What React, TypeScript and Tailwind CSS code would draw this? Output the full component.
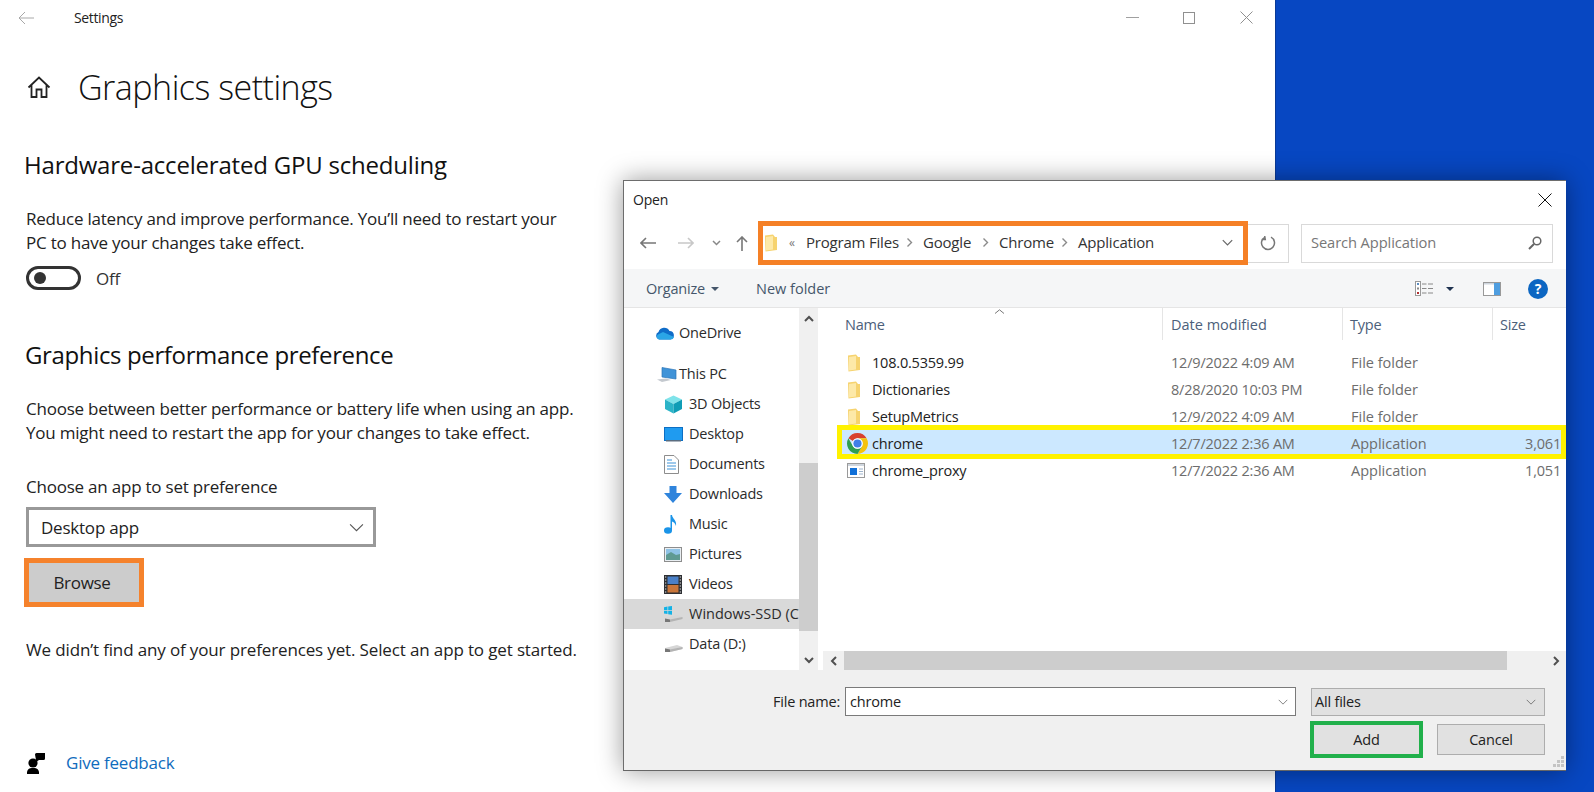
import React from "react";

const Folder = () => (
  <svg width="14" height="18" viewBox="0 0 14 18" className="shrink-0">
    <path d="M1 1.5 L9 0.5 L11 3 L13 3 L13 16 L1.5 17.5 Z" fill="#f6d36f" />
    <path d="M2 3 L9 2 L9 15.5 L2 16.5 Z" fill="#fde9a8" />
  </svg>
);

const Chev = () => (
  <svg width="7" height="11" viewBox="0 0 7 11" className="shrink-0">
    <path d="M1.5 1.5 L5.5 5.5 L1.5 9.5" fill="none" stroke="#8a8a8a" strokeWidth="1.4" />
  </svg>
);

const Down = ({ w = 14, h = 8, c = "#555", sw = 1.2 }: { w?: number; h?: number; c?: string; sw?: number }) => (
  <svg width={w} height={h} viewBox="0 0 14 8">
    <path d="M1 1 L7 7 L13 1" fill="none" stroke={c} strokeWidth={sw} />
  </svg>
);

const ChromeIcon = () => (
  <svg width="21" height="21" viewBox="2 2 20 20" className="shrink-0">
    <path d="M12 2a10 10 0 0 1 8.66 5H12a5 5 0 0 0-4.33 2.5L3.34 7A10 10 0 0 1 12 2z" fill="#d8412f" />
    <path d="M20.66 7A10 10 0 0 1 12 22l4.33-7.5A5 5 0 0 0 12 7h8.66z" fill="#f4c20d" />
    <path d="M12 22A10 10 0 0 1 3.34 7l4.33 7.5A5 5 0 0 0 12 17a5 5 0 0 0 4.33-2.5L12 22z" fill="#2f9e4f" />
    <circle cx="12" cy="12" r="5" fill="#fff" />
    <circle cx="12" cy="12" r="3.9" fill="#3f7fe8" />
  </svg>
);

const ProxyIcon = () => (
  <svg width="18" height="15" viewBox="0 0 18 15" className="shrink-0">
    <rect x="0.5" y="0.5" width="17" height="14" fill="#fff" stroke="#9a9a9a" />
    <rect x="1" y="1" width="16" height="2" fill="#cfd6de" />
    <rect x="3" y="5" width="7" height="7" fill="#1170d8" />
    <path d="M12 6h4M12 8.5h4M12 11h4" stroke="#9fb4cc" />
  </svg>
);

const Cube = () => (
  <svg width="19" height="19" viewBox="0 0 19 19">
    <path d="M9.5 0.5 L18 4.5 L9.5 9 L1 4.5 Z" fill="#7fe3ea" />
    <path d="M1 4.5 L9.5 9 V18.5 L1 14 Z" fill="#2cb4c8" />
    <path d="M18 4.5 L9.5 9 V18.5 L18 14 Z" fill="#0f9db6" />
  </svg>
);
const DesktopI = () => (
  <svg width="19" height="15" viewBox="0 0 19 15">
    <rect x="0.5" y="0.5" width="18" height="13" fill="#1f9bf0" stroke="#0c6fc4" />
    <rect x="2" y="13" width="15" height="1.5" fill="#5a6d80" />
  </svg>
);
const Doc = () => (
  <svg width="15" height="19" viewBox="0 0 15 19">
    <path d="M0.5 0.5 H10 L14.5 5 V18.5 H0.5 Z" fill="#fff" stroke="#8d8d8d" />
    <path d="M3 5h5M3 8h9M3 11h9M3 14h9" stroke="#3d93d8" />
  </svg>
);
const DownloadI = () => (
  <svg width="18" height="17" viewBox="0 0 18 17">
    <path d="M5.5 0 H12.5 V7 H18 L9 17 L0 7 H5.5 Z" fill="#2f84dc" />
  </svg>
);
const MusicI = () => (
  <svg width="13" height="19" viewBox="0 0 13 19">
    <ellipse cx="4" cy="15.5" rx="4" ry="3.2" fill="#1a94e8" />
    <path d="M6.5 0 H8 C8.5 4 13 5 12 11 C11 8 9.5 7 8 6.5 V15.5 H6.5 Z" fill="#1a94e8" />
  </svg>
);
const PicI = () => (
  <svg width="18" height="15" viewBox="0 0 18 15">
    <rect x="0.5" y="0.5" width="17" height="14" fill="#e9eef2" stroke="#8d8d8d" />
    <rect x="2" y="2" width="14" height="6" fill="#8fc3e6" />
    <path d="M2 8 L7 5 L12 8 L16 7 V13 H2 Z" fill="#5f9a92" />
  </svg>
);
const VidI = () => (
  <svg width="18" height="19" viewBox="0 0 18 19">
    <rect width="18" height="19" fill="#2d2f33" />
    <rect x="3.5" y="1.5" width="11" height="7.5" fill="#4a80c8" />
    <rect x="3.5" y="10" width="11" height="7.5" fill="#c9763a" />
    <path d="M1 2h1.3M1 5h1.3M1 8h1.3M1 11h1.3M1 14h1.3M1 17h1.3M15.7 2H17M15.7 5H17M15.7 8H17M15.7 11H17M15.7 14H17M15.7 17H17" stroke="#ddd" />
  </svg>
);
const Drive = ({ win = false }: { win?: boolean }) => (
  <svg width="19" height="17" viewBox="0 0 19 17">
    <path d="M1 12 L13 9 L18.5 11 V13 L6 16 H1 Z" fill="#d6d6d6" />
    <path d="M1 12.5 L6 13.5 V16 H1 Z" fill="#777" />
    <path d="M6 13.5 L18.5 11 V13 L6 16 Z" fill="#b4b4b4" />
    {win && <path d="M0 1.2 L3.5 0.6 V4 H0 Z M4.2 0.5 L8 0 V4 H4.2 Z M0 4.8 H3.5 V8 L0 7.5 Z M4.2 4.8 H8 V8.8 L4.2 8.2 Z" fill="#12b2e6" />}
  </svg>
);
const Cloud = () => (
  <svg width="21" height="14" viewBox="0 0 21 14">
    <path d="M5 13.5 A4 4 0 0 1 4.5 6 A6 6 0 0 1 15.5 5 A4.3 4.3 0 0 1 16.5 13.5 Z" fill="#0f6cc8" />
    <path d="M5 13.5 A2.8 2.8 0 0 1 5 8 L9 6 L20 11 A3.5 3.5 0 0 1 16.5 13.5 Z" fill="#2aa5e6" />
  </svg>
);
const PcI = () => (
  <svg width="20" height="15" viewBox="0 0 20 15">
    <path d="M5 0.5 L19 3 V12 L5 10 Z" fill="#3f93d8" stroke="#2c75b8" strokeWidth="0.7" />
    <path d="M0 12.5 L9 11.5 L14 13 L5 15 Z" fill="#c4c9cf" />
  </svg>
);

const navItems: { label: string; icon: React.ReactNode; sel?: boolean }[] = [
  { label: "3D Objects", icon: <Cube /> },
  { label: "Desktop", icon: <DesktopI /> },
  { label: "Documents", icon: <Doc /> },
  { label: "Downloads", icon: <DownloadI /> },
  { label: "Music", icon: <MusicI /> },
  { label: "Pictures", icon: <PicI /> },
  { label: "Videos", icon: <VidI /> },
  { label: "Windows-SSD (C:)", icon: <Drive win />, sel: true },
  { label: "Data (D:)", icon: <Drive /> },
];

const files: { name: string; icon: React.ReactNode; date: string; type: string; size?: string; sel?: boolean }[] = [
  { name: "108.0.5359.99", icon: <Folder />, date: "12/9/2022 4:09 AM", type: "File folder" },
  { name: "Dictionaries", icon: <Folder />, date: "8/28/2020 10:03 PM", type: "File folder" },
  { name: "SetupMetrics", icon: <Folder />, date: "12/9/2022 4:09 AM", type: "File folder" },
  { name: "chrome", icon: <ChromeIcon />, date: "12/7/2022 2:36 AM", type: "Application", size: "3,061", sel: true },
  { name: "chrome_proxy", icon: <ProxyIcon />, date: "12/7/2022 2:36 AM", type: "Application", size: "1,051" },
];

export default function App() {
  return (
    <div className="relative w-[1594px] h-[792px] overflow-hidden bg-[#0747c2] font-['Open_Sans',sans-serif] text-[#1a1a1a]">
      {/* Settings window */}
      <div className="w-[1276px] h-full bg-white border-r border-[#0a3a96] flex flex-col">
        <div className="h-[35px] flex items-center">
          <svg width="16" height="14" viewBox="0 0 16 14" className="ml-[18px]">
            <path d="M7 1 L1 7 L7 13 M1 7 H16" fill="none" stroke="#a8a8a8" strokeWidth="1" />
          </svg>
          <span className="ml-[40px] text-[14px] tracking-[-0.35px] text-[#222]">Settings</span>
          <div className="ml-auto flex items-center">
            <div className="w-[13px] h-px bg-[#a0a0a0] mr-[44px]" />
            <div className="w-[12px] h-[12px] border border-[#909090] mr-[45px]" />
            <svg width="13" height="13" viewBox="0 0 13 13" className="mr-[22px]">
              <path d="M0.5 0.5 L12.5 12.5 M12.5 0.5 L0.5 12.5" stroke="#909090" strokeWidth="1" />
            </svg>
          </div>
        </div>
        <div className="h-[50px] mt-[27px] flex items-center">
          <svg width="24" height="22" viewBox="0 0 24 22" className="ml-[27px]">
            <path d="M1.5 11.5 L12 1.5 L22.5 11.5 M4.5 9 V21 H9.5 V13.5 H14.5 V21 H19.5 V9" fill="none" stroke="#222" strokeWidth="1.8" />
          </svg>
          <span className="ml-[27px] text-[34px] font-light tracking-[-0.5px] text-[#111]">Graphics settings</span>
        </div>
        <h2 className="h-9 mt-[35px] ml-[24px] text-[24px] leading-[36px] tracking-[-0.2px] font-normal text-[#111]">Hardware-accelerated GPU scheduling</h2>
        <p className="mt-[24px] ml-[26px] text-[17px] leading-6 tracking-[-0.22px] text-[#222]">
          Reduce latency and improve performance. You’ll need to restart your
          <br />
          PC to have your changes take effect.
        </p>
        <div className="mt-[11px] ml-[26px] h-6 flex items-center">
          <div className="w-[55px] h-6 rounded-full border-[3px] border-[#333] flex items-center pl-[5px]">
            <div className="w-3 h-3 rounded-full bg-[#333]" />
          </div>
          <span className="ml-[15px] pt-[2px] text-[17px] tracking-[-0.22px] text-[#333]">Off</span>
        </div>
        <h2 className="h-9 mt-[47px] ml-[25px] text-[24px] leading-[36px] tracking-[-0.36px] font-normal text-[#111]">Graphics performance preference</h2>
        <p className="mt-6 ml-[26px] text-[17px] leading-6 tracking-[-0.22px] text-[#222]">
          Choose between better performance or battery life when using an app.
          <br />
          You might need to restart the app for your changes to take effect.
        </p>
        <div className="mt-[30px] ml-[26px] h-6 text-[17px] leading-6 tracking-[-0.22px] text-[#222]">Choose an app to set preference</div>
        <div className="mt-2 ml-[26px] w-[350px] h-10 border-[3px] border-[#999] flex items-center pl-[12px] pr-[9px]">
          <span className="pt-[1px] text-[17px] tracking-[-0.22px] text-[#222]">Desktop app</span>
          <span className="ml-auto"><Down w={15} h={9} c="#555" sw={1} /></span>
        </div>
        <div className="mt-[11px] ml-[24px] w-[120px] h-[49px] border-[5px] border-[#f5822c] bg-[#cccccc] flex items-center justify-center">
          <span className="pt-[1px] pr-[4px] text-[17px] tracking-[-0.3px] text-[#222]">Browse</span>
        </div>
        <p className="mt-[31px] ml-[26px] h-6 text-[17px] leading-6 tracking-[-0.14px] text-[#222]">We didn’t find any of your preferences yet. Select an app to get started.</p>
        <div className="mt-[89px] ml-[27px] h-6 flex items-center">
          <svg width="18" height="21" viewBox="0 0 18 21">
            <circle cx="6" cy="10" r="4.6" fill="#000" />
            <path d="M0 21 V19 A5 5 0 0 1 5 15 H8 A5 5 0 0 1 12 19 V21 Z" fill="#000" />
            <path d="M8 1.5 A1.5 1.5 0 0 1 9.5 0 H18 V5.5 A1.5 1.5 0 0 1 16.5 7 H12 L9 9 V7 Z" fill="#000" />
          </svg>
          <span className="ml-[21px] text-[17px] tracking-[-0.22px] text-[#0f6cbd]">Give feedback</span>
        </div>
      </div>

      {/* Open dialog (free floating window) */}
      <div className="absolute left-[623px] top-[180px] w-[943px] h-[591px] bg-white border border-[#6d6d6d] border-r-0 border-b-[#666] shadow-[0_0_24px_rgba(0,0,0,0.4)] flex flex-col text-[14.5px] tracking-[-0.2px]">
        <div className="h-[38px] shrink-0 flex items-center pl-[9px] pr-[14px]">
          <span className="pb-[2px] text-[14px] text-[#222]">Open</span>
          <svg width="14" height="14" viewBox="0 0 14 14" className="ml-auto">
            <path d="M0.5 0.5 L13.5 13.5 M13.5 0.5 L0.5 13.5" stroke="#111" strokeWidth="1" />
          </svg>
        </div>

        <div className="h-[50px] shrink-0 flex items-center pb-[2px]">
          <div className="w-[134px] shrink-0 flex items-center pl-[16px]">
            <svg width="16" height="12" viewBox="0 0 16 12"><path d="M6 1 L1 6 L6 11 M1 6 H16" fill="none" stroke="#777" strokeWidth="1.6" /></svg>
            <svg width="16" height="12" viewBox="0 0 16 12" className="ml-[22px]"><path d="M10 1 L15 6 L10 11 M15 6 H0" fill="none" stroke="#c8c8c8" strokeWidth="1.6" /></svg>
            <span className="ml-[18px]"><svg width="9" height="6" viewBox="0 0 9 6"><path d="M1 1 L4.5 4.5 L8 1" fill="none" stroke="#888" strokeWidth="1.5" /></svg></span>
            <svg width="12" height="15" viewBox="0 0 12 15" className="ml-[15px]"><path d="M1 6 L6 1 L11 6 M6 1 V15" fill="none" stroke="#777" strokeWidth="1.6" /></svg>
          </div>
          <div className="w-[490px] h-11 shrink-0 border-[5px] border-[#f58026] flex items-center pl-[1px] pr-[10px] pb-[1px] text-[#333] text-[15px]">
            <Folder />
            <span className="ml-[11px] w-[17px] text-[12px] text-[#777]">«</span>
            <span className="w-[117px] flex items-center">Program Files<span className="ml-auto mr-[10px]"><Chev /></span></span>
            <span className="w-[76px] flex items-center">Google<span className="ml-auto mr-[10px]"><Chev /></span></span>
            <span className="w-[79px] flex items-center">Chrome<span className="ml-auto mr-[10px]"><Chev /></span></span>
            <span>Application</span>
            <span className="ml-auto"><Down w={11} h={7} c="#666" sw={1.5} /></span>
          </div>
          <div className="w-[41px] h-[39px] shrink-0 border border-[#d9d9d9] border-l-0 flex items-center justify-center">
            <svg width="16" height="16" viewBox="0 0 16 16"><path d="M5 2.2 A6.5 6.5 0 1 0 11 2.2 M4.7 1 L5.3 4.6 L1.8 4.6" fill="none" stroke="#777" strokeWidth="1.5" /></svg>
          </div>
          <div className="ml-3 w-[252px] h-[39px] shrink-0 border border-[#d9d9d9] flex items-center pl-[9px] pr-[10px] pb-[1px] text-[#777] tracking-[-0.1px] text-[14.7px]">
            <span>Search Application</span>
            <svg width="14" height="14" viewBox="0 0 14 14" className="ml-auto"><circle cx="9" cy="5" r="3.8" fill="none" stroke="#666" strokeWidth="1.5" /><path d="M6 8 L1 13" stroke="#666" strokeWidth="2" /></svg>
          </div>
        </div>

        <div className="h-[39px] shrink-0 bg-[#f5f6f7] border-b border-[#e5e5e5] flex items-center pl-[22px] pt-[1px] text-[#45566b]">
          <span>Organize</span>
          <svg width="8" height="4" viewBox="0 0 8 4" className="ml-[6px]"><path d="M0 0 H8 L4 4 Z" fill="#45566b" /></svg>
          <span className="ml-[37px] tracking-[0px]">New folder</span>
          <div className="ml-auto flex items-center pr-[18px]">
            <svg width="18" height="15" viewBox="0 0 18 15">
              <rect x="0.5" y="0.5" width="5" height="14" fill="#fff" stroke="#999" />
              <rect x="2" y="2" width="2" height="2" fill="#5a8cc0" /><rect x="2" y="6.5" width="2" height="2" fill="#888" /><rect x="2" y="11" width="2" height="2" fill="#b03030" />
              <path d="M7 3h4.5M13 3h5M7 7.5h4.5M13 7.5h5M7 12h4.5M13 12h5" stroke="#888" />
            </svg>
            <svg width="8" height="4" viewBox="0 0 8 4" className="ml-[13px]"><path d="M0 0 H8 L4 4 Z" fill="#1f3350" /></svg>
            <svg width="18" height="14" viewBox="0 0 18 14" className="ml-[29px]">
              <rect x="0.5" y="0.5" width="17" height="13" fill="#fff" stroke="#999" />
              <rect x="11" y="1" width="6" height="12" fill="#4f9ee0" />
              <rect x="1" y="1" width="10" height="1.5" fill="#cfd6de" />
            </svg>
            <div className="ml-[27px] w-5 h-5 rounded-full bg-[#0c66c2] flex items-center justify-center text-white text-[14px] font-bold leading-none">?</div>
          </div>
        </div>

        <div className="h-[362px] shrink-0 flex">
          {/* Navigation pane */}
          <div className="w-[175px] shrink-0 pt-[10px] text-[#2b2b2b] overflow-hidden">
            <div className="h-[30px] flex items-center pl-[30px]">
              <Cloud />
              <span className="ml-[4px]">OneDrive</span>
            </div>
            <div className="h-[30px] mt-[11px] flex items-center pl-[33px]">
              <PcI />
              <span className="ml-[2px]">This PC</span>
            </div>
            {navItems.map((n) => (
              <div key={n.label} className={`h-[30px] flex items-center whitespace-nowrap ${n.sel ? "bg-[#d9d9d9] tracking-[0px]" : ""}`}>
                <div className="w-[65px] pl-[40px] shrink-0 flex items-center justify-start">{n.icon}</div>
                <span>{n.label}</span>
              </div>
            ))}
          </div>
          {/* Nav scrollbar */}
          <div className="w-[19px] shrink-0 bg-[#f0f0f0] flex flex-col">
            <div className="h-[155px] shrink-0 pt-[7px] flex justify-center">
              <svg width="10" height="7" viewBox="0 0 10 7"><path d="M1 6 L5 2 L9 6" fill="none" stroke="#505050" strokeWidth="2" /></svg>
            </div>
            <div className="h-[168px] shrink-0 bg-[#cdcdcd]" />
            <div className="flex-1 pt-[26px] flex justify-center">
              <svg width="10" height="7" viewBox="0 0 10 7"><path d="M1 1 L5 5 L9 1" fill="none" stroke="#505050" strokeWidth="2" /></svg>
            </div>
          </div>
          <div className="w-[5px] shrink-0" />
          {/* File list */}
          <div className="flex-1 min-w-0 flex flex-col">
            <div className="flex-1 min-h-0 overflow-hidden">
              <div className="h-8 flex text-[#4c607a]">
                <div className="w-[340px] shrink-0 pl-[22px] pt-[6px] border-r border-[#e5e5e5] relative">
                  Name
                  <svg width="11" height="5" viewBox="0 0 11 5" className="absolute left-[171px] top-[1px]"><path d="M1 4.5 L5.5 0.8 L10 4.5" fill="none" stroke="#777" /></svg>
                </div>
                <div className="w-[180px] shrink-0 pl-[8px] pt-[6px] border-r border-[#e5e5e5] tracking-[0px]">Date modified</div>
                <div className="w-[150px] shrink-0 pl-[7px] pt-[6px] border-r border-[#e5e5e5]">Type</div>
                <div className="pl-[7px] pt-[6px]">Size</div>
              </div>
              <div className="pt-[9px] text-[#6d6d6d]">
                {files.map((f) => (
                  <div key={f.name} className={`relative h-[27px] flex items-center ${f.sel ? "z-10" : ""}`}>
                    {f.sel && <div className="absolute left-[14px] right-0 -top-[5px] h-[34px] border-[5px] border-[#fff200] bg-[#cce8ff]" />}
                    <div className="relative w-[49px] shrink-0 pl-[24px] flex items-center">{f.icon}</div>
                    <div className="relative w-[299px] shrink-0 text-[#222]">{f.name}</div>
                    <div className="relative w-[180px] shrink-0">{f.date}</div>
                    <div className="relative flex-1 tracking-[0px]">{f.type}</div>
                    {f.size && <div className="relative pr-[5px]">{f.size}</div>}
                  </div>
                ))}
              </div>
            </div>
            <div className="h-[19px] shrink-0 bg-[#f0f0f0] flex items-center">
              <div className="w-[21px] shrink-0 flex justify-center">
                <svg width="7" height="10" viewBox="0 0 7 10"><path d="M6 1 L2 5 L6 9" fill="none" stroke="#505050" strokeWidth="2" /></svg>
              </div>
              <div className="w-[663px] shrink-0 h-full bg-[#cdcdcd]" />
              <div className="flex-1 pl-[46px]">
                <svg width="7" height="10" viewBox="0 0 7 10"><path d="M1 1 L5 5 L1 9" fill="none" stroke="#505050" strokeWidth="2" /></svg>
              </div>
            </div>
          </div>
        </div>

        {/* Footer */}
        <div className="relative flex-1 bg-[#f0f0f0] pt-[17px] text-[#222]">
          <div className="flex items-center h-[29px]">
            <span className="w-[216px] shrink-0 text-right">File name:</span>
            <div className="ml-[5px] w-[451px] h-[29px] shrink-0 bg-white border border-[#7a7a7a] flex items-center pl-[4px] pr-[7px]">
              <span>chrome</span>
              <span className="ml-auto"><Down w={10} h={6} c="#555" sw={1} /></span>
            </div>
            <div className="ml-[15px] w-[234px] h-[28px] shrink-0 bg-[#e1e1e1] border border-[#adadad] flex items-center pl-[3px] pr-[8px]">
              <span>All files</span>
              <span className="ml-auto"><Down w={10} h={6} c="#555" sw={1} /></span>
            </div>
          </div>
          <div className="flex items-center h-[37px] mt-[5px] pl-[686px]">
            <div className="w-[113px] h-[37px] shrink-0 border-[4px] border-[#21b04b] bg-[#e1e1e1] flex items-center justify-center">Add</div>
            <div className="ml-[14px] w-[108px] h-[31px] shrink-0 border border-[#adadad] bg-[#e1e1e1] flex items-center justify-center">Cancel</div>
          </div>
          <svg width="12" height="12" viewBox="0 0 12 12" className="absolute right-[2px] bottom-[2px]">
            <path d="M9 0h3v3H9zM5 4h3v3H5zM9 4h3v3H9zM1 8h3v3H1zM5 8h3v3H5zM9 8h3v3H9z" fill="#c4c4c4" />
          </svg>
        </div>
      </div>
    </div>
  );
}
